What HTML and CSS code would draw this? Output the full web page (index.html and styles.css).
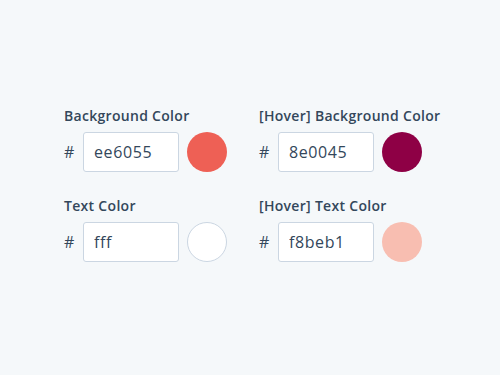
FILE: index.html
```html
<!DOCTYPE html>
<html lang="en">
<head>
    <meta charset="UTF-8">
    <meta name="viewport" content="width=device-width, initial-scale=1.0">
    <title>Button Colors</title>
    <link rel="stylesheet" href="styles.css">
</head>
<body>
    <div class="color-grid">
        <div class="color-field">
            <label class="field-label">Background Color</label>
            <div class="field-row">
                <span class="hash">#</span>
                <input class="hex-input" type="text" value="ee6055">
                <span class="swatch" style="background: #ee6055;"></span>
            </div>
        </div>
        <div class="color-field">
            <label class="field-label">[Hover] Background Color</label>
            <div class="field-row">
                <span class="hash">#</span>
                <input class="hex-input" type="text" value="8e0045">
                <span class="swatch" style="background: #8e0045;"></span>
            </div>
        </div>
        <div class="color-field">
            <label class="field-label">Text Color</label>
            <div class="field-row">
                <span class="hash">#</span>
                <input class="hex-input" type="text" value="fff">
                <span class="swatch swatch-light" style="background: #fff;"></span>
            </div>
        </div>
        <div class="color-field">
            <label class="field-label">[Hover] Text Color</label>
            <div class="field-row">
                <span class="hash">#</span>
                <input class="hex-input" type="text" value="f8beb1">
                <span class="swatch" style="background: #f8beb1;"></span>
            </div>
        </div>
    </div>
</body>
</html>
```

FILE: styles.css
```css
body {
    margin: 0;
    background-color: #f5f8fa;
    font-family: "Open Sans", "Noto Sans", sans-serif;
    color: #33475b;
}
.color-grid {
    display: grid;
    grid-template-columns: 195px 195px;
    row-gap: 24px;
    padding: 106px 0 0 64px;
}
.field-label {
    display: block;
    font-size: 14px;
    font-weight: 600;
    line-height: 20px;
    letter-spacing: 0.3px;
    margin-bottom: 6px;
}
.field-row {
    display: flex;
    align-items: center;
}
.hash {
    width: 19px;
    font-size: 16px;
}
.hex-input {
    box-sizing: border-box;
    width: 96px;
    height: 40px;
    margin: 0 8px 0 0;
    padding: 0 10px;
    border: 1px solid #cbd6e2;
    border-radius: 3px;
    background: #fff;
    font-family: inherit;
    font-size: 16px;
    letter-spacing: 0.6px;
    color: #33475b;
}
.swatch {
    width: 40px;
    height: 40px;
    border-radius: 50%;
}
.swatch-light {
    box-sizing: border-box;
    border: 1px solid #cbd6e2;
}
```
